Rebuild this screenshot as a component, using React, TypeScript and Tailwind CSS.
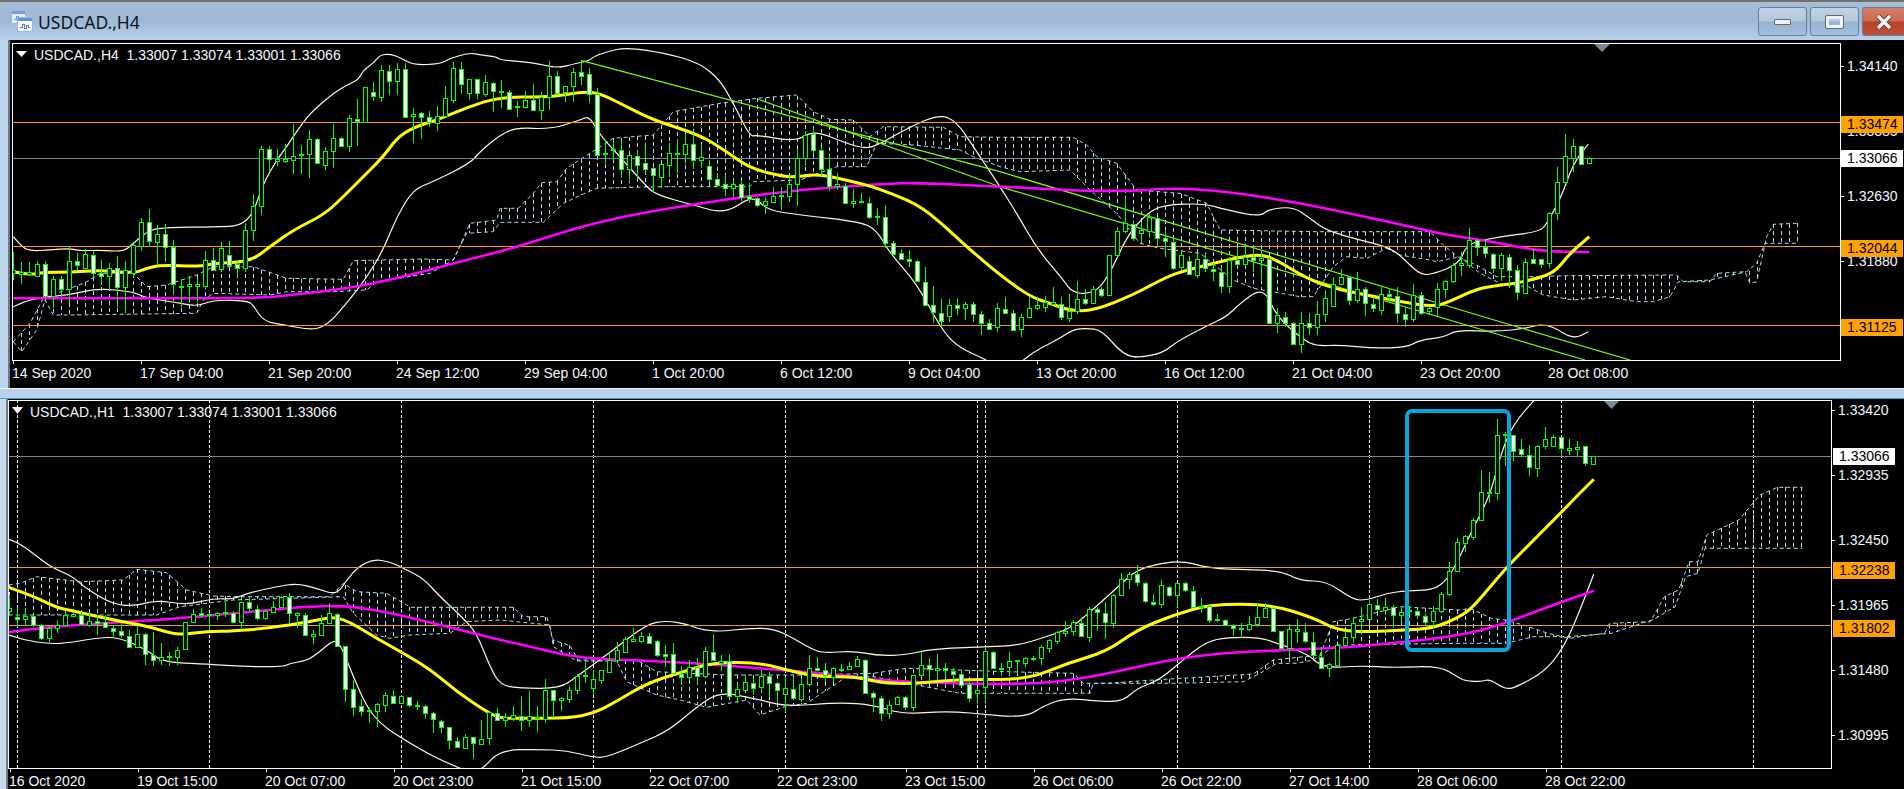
import React from "react";

type Candle = [number, number, number, number, number?];
type Pt = [number, number];

// candles are read off the chart as [bodyTop, bodyBottom, wickTop, wickBottom, white?]
const h4Candles: Candle[] = [
  [690,698,637,720],[697,703,665,733],[695,702,665,707],[673,707,663,707],[673,767,663,775,1],[718,767,708,803],[716,748,708,770,1],[664,748,622,790],[664,674,640,690,1],[643,683,627,683],[644,700,632,710,1],[700,709,660,735,1],[683,709,670,750],[683,742,648,800,1],[691,742,663,820],[616,700,612,710],[547,619,535,633],[547,604,508,620,1],[583,605,555,675],[583,622,553,665,1],[622,732,600,765,1],[738,742,717,800],[733,739,708,780],[733,737,718,785],[661,737,633,745],[661,689,625,692,1],[625,688,605,695],[644,675,604,680,1],[672,684,662,712,1],[571,684,550,695],[497,571,463,603],[328,497,318,525],[328,358,318,395,1],[357,364,328,378],[358,362,312,368],[347,361,253,402],[341,346,316,403],[298,341,270,413],[298,370,295,372,1],[334,374,320,390],[295,334,253,385],[295,317,290,320,1],[235,317,225,335],[236,244,178,318,1],[142,245,142,245],[155,169,126,183,1],[91,170,75,185],[92,122,75,165,1],[88,122,70,165],[88,230,68,232,1],[221,229,205,308],[218,232,217,297,1],[232,247,213,262,1],[227,248,198,272],[175,227,138,230],[85,179,67,188],[86,133,66,162,1],[118,160,118,180],[118,160,118,178,1],[127,161,105,170],[130,152,125,215,1],
  [153,157,120,205],[157,206,150,207,1],[198,201,183,230],[181,201,153,202],[181,209,132,210,1],[170,209,155,240],[109,170,63,210],[109,160,92,165,1],[137,155,137,185],[97,137,85,185],[97,107,60,135,1],[103,163,85,190,1],[163,344,145,345,1],[339,343,300,370],[328,331,300,360],[331,388,300,415,1],[344,388,344,425],[347,374,332,418,1],[370,386,315,400,1],[385,404,380,458,1],[373,410,373,443],[340,374,310,410],[338,342,297,400],[313,341,283,372],[313,361,280,388,1],[352,361,313,385],[379,418,360,430,1],[418,434,400,440,1],[433,445,405,468,1],[433,445,420,470],[433,470,420,483,1],[469,476,430,490,1],[475,494,470,500,1],[484,494,470,522],[469,485,440,490],[465,469,440,510],[433,467,405,485],[355,433,328,497],[284,355,272,378],[283,329,265,342,1],[329,386,320,408,1],[386,437,345,452,1],[433,437,400,450],[437,488,430,490,1],[484,490,448,505],[483,487,460,490],[488,530,470,537,1],[528,532,503,555],[532,608,495,625,1],[610,643,603,645,1],[640,656,627,660,1],[658,664,630,680,1],[664,724,660,725,1],[727,796,680,798,1],[796,815,738,850,1],[818,842,778,860,1],[796,827,778,845],[796,805,775,825,1],[793,805,785,840],[793,823,785,845,1],[823,848,812,885,1],[848,867,838,870,1],[805,862,790,875],
  [806,820,772,822,1],[820,871,810,873,1],[830,868,822,890],[805,830,770,835],[796,805,770,810],[785,802,768,815],[787,791,740,795],[792,832,770,840,1],[812,833,763,845],[776,812,724,822],[776,790,748,795,1],[748,790,738,792],[748,766,740,770,1],[646,764,646,767],[574,646,560,650],[550,574,470,578],[551,594,545,603,1],[571,580,545,605],[532,572,520,595],[533,595,530,620,1],[593,604,570,650,1],[605,683,590,690,1],[646,680,635,690],[664,703,648,706,1],[658,704,640,714],[658,685,636,695,1],[686,694,670,722,1],[695,739,680,758,1],[660,739,650,758],[659,672,625,682,1],[652,673,618,680],[652,660,620,695,1],[655,659,630,725],[658,848,650,850,1],[826,848,805,878],[830,850,815,862,1],[848,913,845,915,1],[848,913,815,938],[848,861,820,885,1],[823,861,783,885],[775,823,750,845],[732,799,712,800],[712,732,688,735],[712,781,708,795,1],[748,781,697,790],[748,790,742,827,1],[791,805,770,815,1],[761,811,740,825],[761,767,745,790,1],[768,820,740,848,1],[821,837,800,862,1],[764,838,732,845],[764,820,757,825,1],[805,812,800,825],[748,800,730,828],[724,748,720,775],[674,724,670,730],[670,674,637,708],[599,674,565,685],[600,622,597,648,1],[622,640,600,653,1],[641,685,640,698,1],
  [645,685,638,722],[650,690,642,745,1],[691,757,675,780,1],[667,758,655,760],[658,668,628,670,1],[658,673,658,683,1],[520,670,515,683],[427,520,380,540],[349,425,282,425],[319,353,298,395],[319,371,319,373,1],[355,370,352,370],
];

const shift = (rows: Candle[], dy: number): Candle[] =>
  rows.map(([a, b, c, d, w]) => [a + dy, b + dy, c + dy, d + dy, w]);

const h1Candles: Candle[] = [
  ...[
    [805,812,770,825],[832,838,805,860,1],[827,838,805,858],[829,855,825,862,1],[856,893,852,900,1],[865,893,858,905],[854,865,840,880],[826,854,815,857],[823,827,815,830],[825,853,815,855,1],[842,855,820,860],[842,848,825,885,1],[845,862,825,865,1],[863,872,855,890,1],[872,886,845,895,1],[887,922,870,925,1],[881,922,857,925],[881,943,880,975,1],[944,961,875,978,1],[952,961,910,975],[948,952,937,977],[929,950,922,975],[847,928,845,930],[821,847,808,850],[818,825,805,835,1],[822,826,820,870],[818,824,815,840],[816,820,785,830],[819,845,812,848,1],[785,845,782,865],[785,805,770,815,1],[806,835,795,840,1],[813,835,810,840],[800,815,782,820],[772,800,768,803],[772,820,760,850,1],[820,824,815,865],[824,886,820,888,1],[883,887,870,912],[850,885,825,888],[820,848,788,852],[821,919,820,920,1],[919,1048,917,1085,1],[1048,1100,1020,1128,1],[1097,1114,1078,1128,1],[1110,1114,1105,1150],[1093,1114,1090,1162],[1066,1096,1055,1115],[1067,1088,1050,1090,1],[1069,1088,1066,1092],[1072,1096,1070,1100,1],[1094,1099,1082,1110,1],[1099,1120,1095,1138,1],[1118,1138,1116,1180,1],[1142,1162,1140,1180,1],[1162,1201,1160,1228,1],[1202,1222,1190,1225,1],[1192,1224,1182,1226],[1192,1210,1190,1256,1],[1196,1211,1140,1212],[1117,1195,1115,1215],[1120,1140,1105,1143,1],
  ] as Candle[],
  ...shift([
    [652,661,640,680],[646,654,618,662],[647,660,588,692,1],[649,660,573,680],[650,655,618,695],[571,657,538,670],[571,601,570,655,1],[595,601,590,632],[570,596,558,610],[529,571,522,582],[524,528,485,548],[538,563,510,585],[511,541,510,552],[480,515,455,518],[451,480,425,482],[418,455,410,458],[418,422,385,425],[409,422,397,428],[408,428,400,430,1],[424,466,420,470,1],[462,469,435,500,1],[463,520,430,522,1],[521,531,498,555,1],[502,531,480,540],[502,529,475,555,1],[454,529,440,530],[455,481,402,483,1],[483,490,465,513],[482,589,463,592,1],[568,588,548,608],[547,569,528,570],[548,565,530,585,1],[528,562,510,575],[529,550,515,590,1],[550,571,545,610,1],[565,581,530,635],[566,595,530,600,1],[553,596,533,605],[503,553,465,555],[503,509,472,510,1],[509,526,490,545,1],[505,530,500,545],[506,511,493,515,1],[499,508,485,510],[478,499,468,500],[479,580,478,582,1],[578,592,575,637,1],[593,639,587,662,1],[614,638,600,658],[590,613,587,616],[590,622,588,630,1],[526,622,526,632],[494,526,457,530],[494,507,475,540,1],[505,509,463,540],[505,511,490,530,1],[512,523,505,550,1],[521,556,510,560,1],[553,595,540,605,1],[571,580,565,605],
    [454,562,440,607],[455,505,453,507,1],[503,507,490,527],[482,502,457,525],[480,484,480,520],[475,488,470,500],[473,477,468,482],[442,475,436,495],[421,445,418,458],[397,422,393,432],[394,398,362,410],[367,392,360,408],[368,408,350,410,1],[327,410,322,425],[328,337,320,392,1],[338,367,305,418,1],[286,368,282,383],[236,286,220,288],[223,236,215,267],[223,247,195,258,1],[248,304,245,308,1],[305,313,282,318,1],[256,313,240,325],[262,286,258,292,1],[250,286,248,320],[250,271,247,275,1],[272,322,258,325,1],[318,322,295,340],[318,360,312,368,1],[357,361,342,365],[359,374,356,376,1],[375,385,372,408,1],[384,388,370,413],[371,388,348,392],[352,371,310,380],[325,352,310,353],[325,394,322,397,1],[394,445,392,447,1],[388,445,373,475],[388,394,358,430],[395,424,368,428,1],[425,466,395,470,1],[470,505,440,507,1],[493,505,490,530],[436,494,435,497],[412,436,395,438],[368,412,352,430],[357,362,320,400],[313,358,300,360],[315,327,298,340,1],[320,331,295,345],[322,344,315,385,1],[335,344,320,365],[330,334,318,345],[333,345,328,355,1],[347,365,340,378,1],[334,362,318,385],[281,333,275,335],[212,282,187,287],[127,214,115,215],
  ] as Candle[], 480),
  ...shift([
    [468,488,465,515],[421,470,415,480],[337,421,270,422],[335,340,277,368],[166,338,118,360],[161,165,155,258],[166,212,165,243,1],[208,223,178,230,1],[224,262,195,288,1],[199,263,195,290],[176,199,142,208],[172,197,165,198],[172,205,170,232,1],[205,209,178,225],[200,208,182,228],[199,250,197,257,1],[229,253,228,254],
  ] as Candle[], 120),
];

// flat [x,y,x,y...] lists, one per zoomed strip of the chart
const at = (dx: number, dy: number, flat: number[], sx = 1): Pt[] => {
  const out: Pt[] = [];
  for (let i = 0; i < flat.length; i += 2) out.push([dx + flat[i] * sx, flat[i + 1] + dy]);
  return out;
};

const h4Lines = {
  upper: [
    ...at(0, 0, [40,590,65,620,90,633,150,630,210,625,240,633,300,630,370,635,395,615,440,575,480,563,650,560,720,558,760,520,790,430,830,360,860,320,900,260,935,215,1000,160,1040,135,1075,120,1090,90,1120,70,1140,45,1170,42,1200,52,1240,75,1320,72,1350,55,1410,38,1440,45,1490,50]),
    ...at(1500, 0, [0,60,105,68,170,85,230,70,268,62,280,50,320,35,380,22,500,40,600,70,660,120,700,190,750,290,770,285,890,305,940,270,1040,310,1090,325,1130,318,1230,260,1320,223,1370,245,1420,320,1500,440]),
    ...at(3000, 0, [50,520,110,625,190,720,215,755,260,763,300,745,340,680,380,590,440,520,490,495,610,490,680,510,780,530,805,508,880,500,930,535,980,572,1080,600,1160,620]),
    ...at(4200, 270, [0,375,60,435,100,432,180,400,200,340,300,320,420,305,440,280,480,210,520,100,565,42]),
  ],
  lower: [
    ...at(0, 0, [40,800,90,775,210,765,290,745,400,755,440,775,520,785,590,800,640,780,740,782,760,795,790,845,860,855,930,870,980,858,1040,790,1095,720,1150,630,1190,530,1240,448,1300,425,1410,370,1440,335,1500,285]),
    ...at(1500, 0, [50,262,150,268,240,240,268,228,300,285,350,340,440,440,470,465,580,495,675,522,760,465,800,510,900,525,1080,545,1130,570,1170,640,1250,730,1320,860,1370,920,1460,960,1500,985]),
    ...at(3000, 0, [40,985,70,960,110,930,180,895,220,868,260,865,305,870,370,945,420,953,490,938,530,905,620,858,680,830,720,790,790,740,830,830,910,900,950,918,1020,915,1120,925]),
    ...at(4200, 270, [20,652,60,630,130,622,170,600,290,605,380,595,420,583,460,590,520,628,565,605]),
  ],
  sma: [
    ...at(0, 0, [40,695,90,705,130,697,210,697,300,690,400,700,440,685,480,675,600,680,640,670,750,665,810,620,880,570,970,525,1020,480,1080,420,1150,350,1190,295,1240,262,1310,240,1400,203,1500,170]),
    ...at(1500, 0, [150,172,250,155,300,160,380,200,460,240,600,285,680,335,750,385,850,410,900,410,960,402,1100,435,1130,445,1250,490,1330,555,1400,620,1500,705]),
    ...at(3000, 0, [90,770,150,790,210,812,280,812,400,765,500,710,560,690,700,655,780,642,830,660,920,715,1000,745,1100,765,1200,785]),
    ...at(4200, 270, [100,530,150,515,210,485,260,470,350,460,430,440,470,420,510,370,568,320]),
  ],
  slow: [
    ...at(0, 0, [40,775,400,775,760,775,880,765,1080,740,1230,705,1400,660,1500,635]),
    ...at(1500, 0, [100,605,270,552,420,520,600,490,750,468,900,450,1000,442,1150,432,1250,428,1500,440]),
    ...at(3000, 0, [170,448,260,453,420,452,480,446,590,447,720,460,900,490,1040,518]),
    ...at(4200, 270, [0,283,130,313,210,325,300,340,430,365,568,366]),
  ],
  cloudTop: [
    ...at(0, 0, [40,905,90,850,130,775,210,745,255,728,300,700,400,700,440,740,500,735,590,705,640,680,760,680,860,715,1030,718,1060,662,1270,657,1360,660,1410,550,1490,540]),
    ...at(1500, 0, [0,505,55,505,100,460,125,428,170,425,200,385,270,340,340,295,460,285,520,215,660,190,770,175,890,165,940,215,990,238,1060,240,1110,290,1150,260,1330,262,1380,290,1500,292]),
    ...at(3000, 0, [220,292,260,315,290,350,350,370,410,450,540,460,620,490,660,570,950,575]),
    ...at(4200, 270, [0,305,90,305,130,345,180,385,230,405,290,440,385,440,500,437,830,435,850,455,930,455,950,430,1035,425,1050,460,1070,455,1100,320,1120,283,1190,280]),
  ],
  cloudBottom: [
    ...at(0, 0, [40,905,65,935,110,870,135,780,160,825,210,825,590,820,610,780,640,760,810,765,860,755,1000,755,1100,750,1130,725,1290,700,1360,660,1400,580,1480,575]),
    ...at(1500, 0, [0,547,130,547,190,490,250,462,290,445,480,440,750,440,760,425,900,420,1010,380,1100,380,1130,310,1240,315,1380,330,1420,350,1500,380]),
    ...at(3000, 0, [60,395,210,390,270,450,350,520,420,610,480,625,600,640,700,720,760,745,900,770,940,770,1000,680,1040,650,1100,655,1160,625]),
    ...at(4200, 270, [0,375,90,390,110,395,180,380,240,430,310,465,385,470,430,495,520,510,620,500,710,515,760,515,810,500,835,455,930,450,1040,425,1070,400,1095,340,1190,340]),
  ],
  trendA: [[1745,62],[3000,395],[4500,845],[4890,960]] as Pt[],
  trendB: [[2275,178],[3000,440],[4500,885],[4755,960]] as Pt[],
};

const h1Lines = {
  upper: [
    ...at(0, 0, [26,598,50,605,100,640,150,680,220,710,250,740,340,795,410,797,470,780,560,795,640,775,700,778,740,760,830,740,890,730,950,745,1010,765,1040,720,1075,680,1120,658,1170,665,1210,685,1270,715,1320,770,1390,835,1430,880,1470,980,1500,1035]),
    ...at(1440, 480, [120,565,240,565,290,530,400,450,500,372,560,362,620,372,660,388,720,395,800,385,880,385,940,415,990,445,1030,460,1120,452,1190,467,1280,465,1350,447]),
    ...at(2880, 480, [80,440,170,437,260,410,330,385,380,345,430,300,480,255,530,210,600,190,670,183,760,208,960,210,1020,243,1100,243,1180,300,1220,300,1280,280,1340,272,1420,270,1460,240,1490,190]),
    ...at(4050, 120, [350,440,395,350,425,230,450,160,480,110,522,60], 1.06),
  ],
  lower: [
    ...at(0, 0, [26,885,70,900,150,912,210,908,300,892,360,893,440,930,480,960,530,968,620,972,740,980,850,980,870,970,920,962,960,935,1000,900,1020,910,1060,1010,1100,1100,1140,1150,1190,1185,1290,1245,1380,1285,1415,1300,1450,1285,1500,1230]),
    ...at(1440, 480, [180,748,260,752,340,772,380,772,480,730,570,690,650,620,720,575,830,597,920,620,1080,607,1180,615,1270,643,1400,633]),
    ...at(2880, 480, [100,645,150,650,210,645,250,618,320,593,420,605,490,603,530,565,600,540,680,470,740,425,800,412,900,412,950,430,1040,460,1090,505,1200,497,1300,503,1440,498,1500,535]),
    ...at(4050, 120, [330,903,375,905,395,897,440,928,470,922,550,875,600,810,640,720,690,582], 1.06),
  ],
  sma: [
    ...at(0, 0, [26,742,100,768,170,803,220,813,340,840,440,858,520,882,560,882,620,875,700,873,800,865,900,850,950,840,1020,828,1130,895,1220,945,1300,995,1370,1055,1460,1115,1500,1135]),
    ...at(1440, 480, [120,655,270,655,340,640,400,610,500,550,600,518,700,487,840,488,940,515,1020,530,1130,530,1200,548,1300,552,1440,537]),
    ...at(2880, 480, [200,540,320,490,440,455,530,390,640,345,750,313,930,313,1060,353,1120,385,1190,397,1330,390,1420,385,1500,350]),
    ...at(4050, 120, [350,680,440,565,520,480,600,395,640,350,690,298], 1.06),
  ],
  slow: [
    ...at(0, 0, [26,876,130,862,380,845,500,838,760,815,900,800,1040,797,1140,812,1260,840,1400,875,1500,900]),
    ...at(1440, 480, [130,435,240,462,340,477,500,482,720,495,900,510,1100,525,1200,543]),
    ...at(2880, 480, [150,555,360,540,620,480,800,457,1000,450,1200,440,1500,408]),
    ...at(4050, 120, [440,730,560,680,690,632], 1.06),
  ],
  cloudTop: [
    ...at(0, 0, [26,735,60,730,110,710,240,725,370,720,410,688,500,698,560,750,640,768,720,770,990,770,1030,730,1070,755,1160,760,1220,795,1230,802,1500,802]),
    ...at(1440, 480, [100,322,130,350,200,350,220,420,270,437,295,480,470,480,530,515,740,525,1000,525,1180,520,1280,505]),
    ...at(2880, 480, [140,515,340,520,370,550,440,550,580,540,880,522,940,480,1080,465,1120,365,1180,355,1320,320,1500,330]),
    ...at(4050, 120, [340,685,400,715,440,720,500,738,560,760,620,775,720,760,735,730,850,725,890,650,930,630,960,545,985,545,1010,465,1100,420,1160,345,1210,322,1280,322], 1.06),
  ],
  cloudBottom: [
    ...at(0, 0, [26,825,470,825,540,800,620,790,700,780,1030,770,1060,820,1130,885,1170,895,1230,885,1350,880,1400,845,1500,840]),
    ...at(1440, 480, [210,375,220,440,290,483,410,483,440,545,530,585,600,600,680,622,800,600,840,645,915,620,980,610,1040,570,1100,530,1180,530,1440,580]),
    ...at(2880, 480, [390,580,400,550,640,550,850,545,900,520,950,490,1010,490,1060,480,1130,435,1500,430]),
    ...at(4050, 120, [440,790,520,770,610,770,740,760,860,718,920,680,950,590,985,580,1005,505,1280,505], 1.06),
  ],
};

function interp(pts: Pt[], x: number) {
  for (let i = 1; i < pts.length; i++) {
    if (x <= pts[i][0]) {
      const [x0, y0] = pts[i - 1];
      const [x1, y1] = pts[i];
      return x1 === x0 ? y1 : y0 + ((y1 - y0) * (x - x0)) / (x1 - x0);
    }
  }
  return pts[pts.length - 1][1];
}

function PlotLayers({
  candles, lines, startX, originY, hLines, grid,
}: {
  candles: Candle[];
  lines: typeof h1Lines & { trendA?: Pt[]; trendB?: Pt[] };
  startX: number;
  originY: number;
  hLines: { y: number; color: string }[];
  grid: number[];
}) {
  const real = ([x, y]: Pt): Pt => [x / 3, originY + y / 3];
  const poly = (pts: Pt[]) => pts.map((p) => real(p).map((n) => n.toFixed(1)).join(",")).join(" ");
  // rounded through the midpoints, the indicators on the chart have no corners
  const smooth = (pts: Pt[]) => {
    const r = pts.map(real);
    let d = `M${r[0][0].toFixed(1)} ${r[0][1].toFixed(1)}`;
    for (let i = 1; i < r.length - 1; i++) {
      const mx = (r[i][0] + r[i + 1][0]) / 2;
      const my = (r[i][1] + r[i + 1][1]) / 2;
      d += `Q${r[i][0].toFixed(1)} ${r[i][1].toFixed(1)} ${mx.toFixed(1)} ${my.toFixed(1)}`;
    }
    const e = r[r.length - 1];
    return `${d}L${e[0].toFixed(1)} ${e[1].toFixed(1)}`;
  };
  const Y = (v: number) => Math.round(originY + v / 3);

  const cloudFrom = lines.cloudTop[0][0] / 3;
  const cloudTo = lines.cloudTop[lines.cloudTop.length - 1][0] / 3;
  const hatch: number[] = [];
  for (let x = startX; x <= cloudTo + 1; x += 8) if (x >= cloudFrom) hatch.push(x);

  return (
    <>
      {grid.map((x) => (
        <line key={x} x1={x + 0.5} x2={x + 0.5} y1={380} y2={790} stroke="#fff" strokeDasharray="3 2" shapeRendering="crispEdges" />
      ))}
      <g stroke="#a8dfe6" fill="none" strokeDasharray="4 3">
        <polyline points={poly(lines.cloudTop)} />
        <polyline points={poly(lines.cloudBottom)} />
        {hatch.map((x) => (
          <line
            key={x}
            x1={x}
            x2={x}
            y1={originY + interp(lines.cloudTop, x * 3) / 3}
            y2={originY + interp(lines.cloudBottom, x * 3) / 3}
            shapeRendering="crispEdges"
          />
        ))}
      </g>
      <g stroke="#fff8dc" fill="none" strokeWidth={1.2}>
        <path d={smooth(lines.upper)} />
        <path d={smooth(lines.lower)} />
      </g>
      {hLines.map((l) => (
        <line key={l.y} x1={0} x2={1900} y1={l.y + 0.5} y2={l.y + 0.5} stroke={l.color} shapeRendering="crispEdges" />
      ))}
      {lines.trendA && <polyline points={poly(lines.trendA)} fill="none" stroke="#7cfc00" strokeWidth={1.2} />}
      {lines.trendB && <polyline points={poly(lines.trendB)} fill="none" stroke="#7cfc00" strokeWidth={1.2} />}
      <path d={smooth(lines.slow)} fill="none" stroke="#ff00ff" strokeWidth={2.6} />
      <path d={smooth(lines.sma)} fill="none" stroke="#ffff00" strokeWidth={3} />
      <g shapeRendering="crispEdges">
        {candles.map(([t, b, hi, lo, white], i) => {
          const x = startX + 8 * i;
          return (
            <g key={i}>
              <line x1={x} x2={x} y1={Y(hi)} y2={Y(lo)} stroke="#00ff00" />
              <rect
                x={x - 2}
                y={Y(t) + 0.5}
                width={4}
                height={Math.max(1, Y(b) - Y(t))}
                fill={white ? "#fff" : "#000"}
                stroke="#00ff00"
              />
            </g>
          );
        })}
      </g>
    </>
  );
}

function PriceAxis({ prices, pad, badges, left }: {
  prices: string[];
  pad: string;
  badges: { text: string; top: string; white?: boolean }[];
  left: string;
}) {
  return (
    <div className={`relative flex-1 flex flex-col gap-[45px] ${pad}`}>
      {prices.map((p) => (
        <div key={p} className="h-5 flex items-center">
          <span className="w-[3px] h-px bg-white mr-[3px]" />
          <span className="text-[14px] text-[#f4f8ff]">{p}</span>
        </div>
      ))}
      {badges.map((b) => (
        <div
          key={b.text}
          className={`absolute h-[17px] w-[62px] pl-[6px] flex items-center text-[14px] text-black ${left} ${b.top} ${b.white ? "bg-white" : "bg-[#ffa200]"}`}
        >
          {b.text}
        </div>
      ))}
    </div>
  );
}

function TimeAxis({ labels, pad }: { labels: string[]; pad: string }) {
  return (
    <div className={`flex ${pad}`}>
      {labels.map((l) => (
        <div key={l} className="w-[128px] shrink-0 flex flex-col">
          <span className="w-px h-[3px] bg-white ml-px" />
          <span className="mt-px leading-[16px] text-[14px] text-[#f4f8ff] whitespace-pre">{l}</span>
        </div>
      ))}
    </div>
  );
}

function WindowIcon() {
  return (
    <svg width="22" height="22" viewBox="0 0 22 22" shapeRendering="crispEdges">
      <rect x="0.5" y="0.5" width="14" height="13" fill="#e3edfb" stroke="#9db7dd" />
      <rect x="1" y="1" width="13" height="3" fill="#6f9ee0" />
      <path d="M3 9h2v-3h2v4h2v-2h3" fill="none" stroke="#6f9ee0" />
      <rect x="6.5" y="7.5" width="15" height="14" fill="#f6faff" stroke="#9db7dd" />
      <rect x="7" y="8" width="14" height="3" fill="#5e91dc" />
      <path d="M9 17h2v-3h2v4h2v-3h2v2h2" fill="none" stroke="#4f84d6" />
    </svg>
  );
}

function Button({ children, red }: { children: React.ReactNode; red?: boolean }) {
  return (
    <div
      className={`h-[29px] flex items-center justify-center border border-[#62809c] rounded-[3px] ${
        red
          ? "w-[42px] rounded-r-none border-r-0 bg-[linear-gradient(#d9806a_0%,#c8694f_48%,#b8422a_52%,#bd4f36_100%)]"
          : "w-[49px] bg-[linear-gradient(#c0d2e4_0%,#b4c9de_48%,#96b3cf_52%,#a5bed8_100%)]"
      }`}
    >
      {children}
    </div>
  );
}

function TitleBar() {
  return (
    <div className="h-10 shrink-0 border-t-2 border-[#6f6f6f] bg-[linear-gradient(#a6bdd4_0%,#9eb9d5_50%,#b6d1ec_100%)] flex items-start">
      <div className="ml-[11px] mt-2">
        <WindowIcon />
      </div>
      <span className="ml-[5px] mt-[7px] leading-[26px] text-[17.5px] text-[#10151c] font-['Noto_Sans',sans-serif]">USDCAD.,H4</span>
      <div className="ml-auto mt-[5px] flex gap-[3px]">
        <Button>
          <span className="w-[17px] h-[6px] bg-[#eef2f6] border border-[#5b6b7b] rounded-[1px]" />
        </Button>
        <Button>
          <span className="w-[17px] h-[12px] border-[3px] border-[#eef2f6] outline outline-1 outline-[#5b6b7b] rounded-[1px]" />
        </Button>
        <Button red>
          <svg width="18" height="16" viewBox="0 0 18 16">
            <path d="M3 2l12 12M15 2L3 14" fill="none" stroke="#5a2a20" strokeWidth="5" />
            <path d="M3 2l12 12M15 2L3 14" fill="none" stroke="#f4f4f4" strokeWidth="3.5" />
          </svg>
        </Button>
      </div>
    </div>
  );
}

function Header({ text, left, top }: { text: string; left: string; top: string }) {
  return (
    <span className={`absolute leading-4 text-[14px] text-[#f4f8ff] whitespace-pre ${left} ${top}`}>{text}</span>
  );
}

export default function App() {
  return (
    <div className="w-[1904px] h-[789px] overflow-hidden flex flex-col bg-[#bcd4ec] font-['Liberation_Sans',sans-serif]">
      <TitleBar />

      <div className="h-[348px] shrink-0 flex">
        <div className="w-2 shrink-0 bg-[#bcd4ec]" />
        <div className="w-[2px] shrink-0 bg-[#6c7a88]" />
        <div className="flex-1 bg-black flex flex-col">
          <div className="flex pl-[2px] pt-[3px] h-[321px]">
            <div className="relative w-[1829px] h-[318px] border border-white shrink-0">
              <svg width="1827" height="316" viewBox="13 44 1827 316" className="block">
                <PlotLayers
                  candles={h4Candles}
                  lines={h4Lines as any}
                  startX={13.5}
                  originY={40}
                  grid={[]}
                  hLines={[
                    { y: 122, color: "#ff9a00" },
                    { y: 158, color: "#778899" },
                    { y: 246, color: "#ff9a00" },
                    { y: 325, color: "#ef9a10" },
                  ]}
                />
                <polygon points="1594,44 1610,44 1602,52" fill="#778899" />
                <polygon points="16,51 27,51 21.5,57" fill="#fff" />
              </svg>
              <Header text="USDCAD.,H4  1.33007 1.33074 1.33001 1.33066" left="left-[21px]" top="top-[3px]" />
            </div>
            <PriceAxis
              pad="pt-[13px]"
              left="left-0"
              prices={["1.34140", "1.33385", "1.32630", "1.31880"]}
              badges={[
                { text: "1.33474", top: "top-[73px]" },
                { text: "1.33066", top: "top-[107px]", white: true },
                { text: "1.32044", top: "top-[197px]" },
                { text: "1.31125", top: "top-[276px]" },
              ]}
            />
          </div>
          <TimeAxis
            pad="pl-[2px]"
            labels={["14 Sep 2020", "17 Sep 04:00", "21 Sep 20:00", "24 Sep 12:00", "29 Sep 04:00", "1 Oct 20:00", "6 Oct 12:00", "9 Oct 04:00", "13 Oct 20:00", "16 Oct 12:00", "21 Oct 04:00", "23 Oct 20:00", "28 Oct 08:00"]}
          />
        </div>
      </div>

      <div className="h-[11px] shrink-0 border-t border-[#f2f2f2] border-b border-b-[#27a6c6] bg-[#b9d0ea]" />

      <div className="h-[390px] shrink-0 flex">
        <div className="w-[6px] shrink-0 bg-[#c9dbee]" />
        <div className="w-[2px] shrink-0 bg-[#6c7a88]" />
        <div className="flex-1 bg-black flex flex-col">
          <div className="flex pt-px h-[370px]">
            <div className="relative w-[1824px] h-[369px] border border-white shrink-0">
              <svg width="1822" height="367" viewBox="9 401 1822 367" className="block">
                <PlotLayers
                  candles={h1Candles}
                  lines={h1Lines as any}
                  startX={9.5}
                  originY={340}
                  grid={[17, 209, 401, 593, 785, 977, 985, 1177, 1369, 1561, 1753]}
                  hLines={[
                    { y: 456, color: "#778899" },
                    { y: 567, color: "#e0a030" },
                    { y: 625, color: "#e0a030" },
                  ]}
                />
                <polygon points="1604,401 1619,401 1611.5,409" fill="#778899" />
                <polygon points="12,407 23,407 17.5,414" fill="#fff" />
                <rect x="1407" y="411" width="102" height="239" rx="5" fill="none" stroke="#0ba5dd" strokeWidth="4" />
              </svg>
              <Header text="USDCAD.,H1  1.33007 1.33074 1.33001 1.33066" left="left-[21px]" top="top-[3px]" />
            </div>
            <PriceAxis
              pad=""
              left="left-px"
              prices={["1.33420", "1.32935", "1.32450", "1.31965", "1.31480", "1.30995"]}
              badges={[
                { text: "1.33066", top: "top-[48px]", white: true },
                { text: "1.32238", top: "top-[162px]" },
                { text: "1.31802", top: "top-[220px]" },
              ]}
            />
          </div>
          <TimeAxis
            pad="pl-px"
            labels={["16 Oct 2020", "19 Oct 15:00", "20 Oct 07:00", "20 Oct 23:00", "21 Oct 15:00", "22 Oct 07:00", "22 Oct 23:00", "23 Oct 15:00", "26 Oct 06:00", "26 Oct 22:00", "27 Oct 14:00", "28 Oct 06:00", "28 Oct 22:00"]}
          />
        </div>
      </div>
    </div>
  );
}
